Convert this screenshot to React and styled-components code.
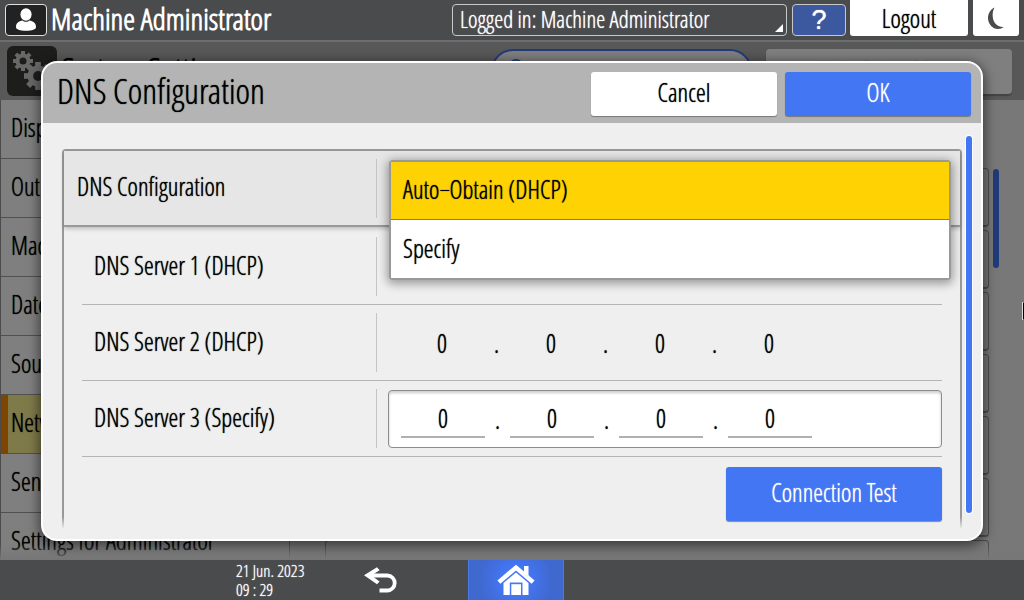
import React, { useState } from 'react';
import styled, { createGlobalStyle } from 'styled-components';

const menuItems = [
  'Display/Input',
  'Output/Input Trays',
  'Machine',
  'Date/Time/Timer',
  'Sound',
  'Network/Interface',
  'Send (Email/Folder)',
  'Settings for Administrator',
];

const settingCards = [1, 2, 3, 4, 5, 6, 7];

const dnsOptions = ['Auto−Obtain (DHCP)', 'Specify'];

const UserIcon = () => (
  <svg width="22" height="24" viewBox="0 0 22 24" fill="#fff" aria-hidden="true">
    <ellipse cx="11" cy="6.5" rx="5.6" ry="6.2" />
    <path d="M1 19c0-4 3-6 6.500-6.500C9 14.200 13 14.200 14.500 12.500 18 13 21 15 21 19c0 2.500-4 3.700-10 3.700S1 21.500 1 19z" />
  </svg>
);

const MoonIcon = () => (
  <svg width="18" height="24" viewBox="0 0 18 24" aria-hidden="true">
    <path d="M7.500 1.500C3.500 3.500 1 7.500 1 12c0 6 4.500 11 10 11 2.200 0 4.200-.7 5.800-2C11 21.500 7 17.500 6 12.500 5.200 8.500 5.700 4.500 7.500 1.500z" fill="#4a4b4c" />
  </svg>
);

const BackIcon = () => (
  <svg width="34" height="28" viewBox="0 0 34 28" fill="none" aria-hidden="true">
    <path d="M6 9.500h17.500a7.200 7.500 0 0 1 0 15H15.500" stroke="#fff" strokeWidth="3.800" />
    <path d="M13 1.200L0 9.300l13 8.900 2.600-2.800-8.200-6 8.200-5.200z" fill="#fff" />
  </svg>
);

const HomeIcon = () => (
  <svg width="38" height="32" viewBox="0 0 38 32" aria-hidden="true">
    <path d="M27 2H31.500v10.500L27 8.500z" fill="#fff" />
    <path d="M19 .8L37.600 16.500l-3 3.200L19 6.500 3.400 19.700l-3-3.200z" fill="#fff" />
    <path d="M19 8.500L31.500 19v12H25.500V18.500H12.800V31H6.500V19z" fill="#fff" />
    <path d="M14.300 20.200H24V31h-9.700z" fill="#fff" />
  </svg>
);

const Gear = ({ x, y, size }) => (
  <g transform={`translate(${x} ${y}) scale(${size})`}>
    {[0, 45, 90, 135].map((angle) => (
      <rect key={angle} x="-2" y="-10" width="4" height="20" transform={`rotate(${angle})`} />
    ))}
    <circle r="7.5" />
    <circle r="3.5" fill="#3a3a38" />
  </g>
);

const GearsIcon = () => (
  <svg width="50" height="50" viewBox="0 0 50 50" fill="#d0d0d0" aria-hidden="true">
    <Gear x={16} y={15} size={1} />
    <Gear x={31} y={30} size={1.4} />
  </svg>
);

const Octets = ({ name, label, editable }) => {
  const [values, setValues] = useState(['0', '0', '0', '0']);

  const handleChange = (index) => (e) => {
    const next = [...values];
    next[index] = e.target.value;
    setValues(next);
  };

  return (
    <OctetGroup role="group" aria-label={label} $editable={editable}>
      {values.map((value, i) => (
        <React.Fragment key={i}>
          {i > 0 && <Dot>.</Dot>}
          {editable ? (
            <OctetInput
              name={`${name}-${i}`}
              aria-label={`${label} ${i + 1}`}
              value={value}
              onChange={handleChange(i)}
            />
          ) : (
            <OctetValue>{value}</OctetValue>
          )}
        </React.Fragment>
      ))}
    </OctetGroup>
  );
};

const App = () => {
  const [mode, setMode] = useState(dnsOptions[0]);

  return (
    <Screen>
      <GlobalStyle />
      <TopBar>
        <UserBadge>
          <UserIcon />
        </UserBadge>
        <ScreenTitle>Machine Administrator</ScreenTitle>
        <LoginButton type="button">Logged in: Machine Administrator</LoginButton>
        <HelpButton type="button">?</HelpButton>
        <LogoutButton type="button">Logout</LogoutButton>
        <MoonButton type="button" aria-label="Sleep">
          <MoonIcon />
        </MoonButton>
      </TopBar>

      <Workspace>
        <SubHeader>
          <GearBox>
            <GearsIcon />
          </GearBox>
          <SubTitle>System Settings</SubTitle>
          <SearchBox>
            <SearchDot />
          </SearchBox>
          <GuideButton type="button">Help Guide Menu</GuideButton>
        </SubHeader>
        <Columns>
          <SideMenu>
            {menuItems.map((item) => (
              <SideItem key={item} type="button" $active={item.startsWith('Network')}>
                {item}
              </SideItem>
            ))}
          </SideMenu>
          <CardList>
            {settingCards.map((card) => (
              <Card key={card} />
            ))}
          </CardList>
          <PageThumb />
        </Columns>

        <Backdrop>
          <Dialog role="dialog" aria-labelledby="dialog-title">
            <DialogHeader>
              <DialogTitle id="dialog-title">DNS Configuration</DialogTitle>
              <DialogButton type="button">Cancel</DialogButton>
              <DialogButton type="button" $primary>OK</DialogButton>
            </DialogHeader>
            <DialogBody>
              <Panel>
                <ModeRow>
                  <Label>DNS Configuration</Label>
                  <DropAnchor>
                    <DropList role="listbox" aria-label="DNS Configuration">
                      {dnsOptions.map((option) => (
                        <DropOption
                          key={option}
                          type="button"
                          role="option"
                          aria-selected={option === mode}
                          $selected={option === mode}
                          onClick={() => setMode(option)}
                        >
                          {option}
                        </DropOption>
                      ))}
                    </DropList>
                  </DropAnchor>
                </ModeRow>
                <Row>
                  <Label>DNS Server 1 (DHCP)</Label>
                </Row>
                <Row>
                  <Label>DNS Server 2 (DHCP)</Label>
                  <Octets name="dns2" label="DNS Server 2" />
                </Row>
                <Row>
                  <Label>DNS Server 3 (Specify)</Label>
                  <Octets name="dns3" label="DNS Server 3" editable />
                </Row>
                <Actions>
                  <TestButton type="button">Connection Test</TestButton>
                </Actions>
              </Panel>
              <ScrollThumb />
            </DialogBody>
          </Dialog>
        </Backdrop>
        <Pointer />
      </Workspace>

      <BottomBar>
        <Clock>
          21 Jun. 2023
          <br />
          09 : 29
        </Clock>
        <BackButton type="button" aria-label="Back">
          <BackIcon />
        </BackButton>
        <HomeButton type="button" aria-label="Home">
          <HomeIcon />
        </HomeButton>
      </BottomBar>
    </Screen>
  );
};

const GlobalStyle = createGlobalStyle`
  * {
    box-sizing: border-box;
  }

  body {
    margin: 0;
    overflow: hidden;
  }

  body, button, input {
    font-family: "Open Sans Condensed Light", "Open Sans Condensed", "Roboto Condensed", sans-serif;
    font-weight: 400;
    font-size: 25px;
    line-height: 34px;
    color: #000;
    text-shadow: 0 0 1px currentColor;
  }

  button {
    padding: 0;
    border: none;
    cursor: pointer;
    white-space: nowrap;
  }
`;

const Screen = styled.div`
  display: flex;
  flex-direction: column;
  height: 100vh;
  background: #4a4b4c;
`;

const TopBar = styled.header`
  display: flex;
  align-items: flex-start;
  height: 42px;
  padding: 0 5px;
  border-bottom: 2px solid #6e6e6e;
`;

const UserBadge = styled.div`
  display: flex;
  align-items: center;
  justify-content: center;
  width: 42px;
  height: 32px;
  margin-top: 4px;
  border: 1px solid #e0e0e0;
  border-radius: 4px;
  background: #222;
`;

const ScreenTitle = styled.h1`
  flex: 1;
  margin: 0 0 0 4px;
  font-size: 30px;
  font-weight: 600;
  line-height: 38px;
  color: #fff;
  text-shadow: none;
`;

const LoginButton = styled.button`
  position: relative;
  width: 335px;
  height: 32px;
  margin-top: 4px;
  padding: 0 0 2px 7px;
  border: 1px solid #c8c8c8;
  border-radius: 4px;
  background: transparent;
  color: #fff;
  font-size: 23px;
  line-height: 28px;
  text-align: left;

  &::after {
    content: "";
    position: absolute;
    right: 3px;
    bottom: 3px;
    border-bottom: 8px solid #fff;
    border-left: 8px solid transparent;
  }
`;

const HelpButton = styled.button`
  width: 54px;
  height: 32px;
  margin: 4px 4px 0 5px;
  border: 1px solid #c8c8c8;
  border-radius: 4px;
  background: #3c589e;
  color: #fff;
  font-family: "Liberation Sans", sans-serif;
  font-size: 27px;
  line-height: 30px;
`;

const LogoutButton = styled.button`
  width: 118px;
  height: 36px;
  margin-right: 5px;
  border-radius: 0 0 3px 3px;
  background: #fff;
`;

const MoonButton = styled.button`
  display: flex;
  align-items: center;
  justify-content: center;
  width: 46px;
  height: 36px;
  border-radius: 0 0 3px 3px;
  background: #fff;
`;

const Workspace = styled.main`
  position: relative;
  flex: 1;
  display: flex;
  flex-direction: column;
  min-height: 0;
  overflow: hidden;
  background: #f0f0f0;
`;

const SubHeader = styled.div`
  display: flex;
  align-items: flex-start;
  height: 58px;
  padding: 4px 12px 0 7px;
  background: #b0b0b0;
`;

const GearBox = styled.div`
  width: 50px;
  height: 50px;
  border-radius: 6px;
  background: #3a3a38;
`;

const SubTitle = styled.h2`
  flex: 1;
  margin: 4px 0 0 4px;
  font-size: 35px;
  font-weight: inherit;
  line-height: 40px;
`;

const SearchBox = styled.div`
  width: 261px;
  height: 44px;
  margin: 3px 14px 0 0;
  padding: 8px 16px;
  border: 2px solid #4276f3;
  border-radius: 22px;
  background: #fff;
`;

const SearchDot = styled.div`
  width: 14px;
  height: 14px;
  border: 3px solid #4276f3;
  border-radius: 7px;
`;

const GuideButton = styled.button`
  width: 246px;
  height: 45px;
  margin-top: 3px;
  padding-bottom: 4px;
  border-radius: 4px;
  background: #fff;
  box-shadow: 0 2px 1px #888;
`;

const Columns = styled.div`
  flex: 1;
  display: flex;
  min-height: 0;
`;

const SideMenu = styled.nav`
  display: flex;
  flex-direction: column;
  width: 290px;
  overflow: hidden;
  border-left: 1px solid #999;
  border-right: 1px solid #aaa;
`;

const SideItem = styled.button`
  flex: none;
  height: 59px;
  padding: 0 0 4px ${({ $active }) => ($active ? '3px' : '10px')};
  border-bottom: 1px solid #a0a0a0;
  border-left: ${({ $active }) => ($active ? '7px solid #ff8a00' : 'none')};
  background: ${({ $active }) => ($active ? '#fff494' : '#fff')};
  text-align: left;
`;

const CardList = styled.div`
  flex: 1;
  display: flex;
  flex-direction: column;
  gap: 3px;
  padding: 68px 4px 0 35px;
  overflow: hidden;
`;

const Card = styled.div`
  flex: none;
  height: 59px;
  border: 1px solid #999;
  border-bottom-width: 2px;
  border-radius: 4px;
`;

const PageThumb = styled.div`
  width: 6px;
  height: 99px;
  margin: 69px 25px 0 0;
  border-radius: 3px;
  background: #4276f3;
`;

const Backdrop = styled.div`
  position: absolute;
  inset: 0;
  display: flex;
  padding: 19px 41px;
  background: linear-gradient(transparent 97%, #777 100%), rgba(0, 0, 0, 0.5);
`;

const Dialog = styled.section`
  flex: 1;
  display: flex;
  flex-direction: column;
  overflow: hidden;
  border: 2px solid #fff;
  border-radius: 16px;
  background: #efefef;
  box-shadow: 0 3px 12px 2px rgba(0, 0, 0, 0.5);
`;

const DialogHeader = styled.header`
  display: flex;
  align-items: flex-start;
  gap: 8px;
  height: 60px;
  padding: 9px 10px 0 14px;
  background: #b4b4b4;
`;

const DialogTitle = styled.h2`
  flex: 1;
  margin: 0;
  font-size: 35px;
  font-weight: inherit;
  line-height: 38px;
`;

const DialogButton = styled.button`
  width: 186px;
  height: 44px;
  padding-bottom: 4px;
  border-radius: 3px;
  background: ${({ $primary }) => ($primary ? '#4276f3' : '#fff')};
  box-shadow: 0 1px 1px #777;
  color: ${({ $primary }) => ($primary ? '#fff' : '#000')};
`;

const DialogBody = styled.div`
  flex: 1;
  display: flex;
  gap: 4px;
  min-height: 0;
  padding: 13px 9px 10px 19px;
`;

const Panel = styled.div`
  position: relative;
  flex: 1;
  margin-top: 13px;
  border: 2px solid #999;
  border-bottom: none;
  border-radius: 4px 4px 0 0;

  &::after {
    content: "";
    position: absolute;
    inset: auto -2px 0;
    height: 12px;
    background: linear-gradient(transparent, #efefef);
    pointer-events: none;
  }
`;

const Label = styled.div`
  display: flex;
  align-items: center;
  height: 59px;
  padding-bottom: 4px;
  border-right: 1px solid #c4c4c4;
`;

const ModeRow = styled.div`
  display: grid;
  grid-template-columns: 300px 1fr;
  align-items: center;
  height: 76px;
  padding-left: 13px;
  border-bottom: 2px solid #999;
  background: #e6e6e6;
  box-shadow: 0 2px 4px rgba(0, 0, 0, 0.2);
`;

const Row = styled.div`
  display: grid;
  grid-template-columns: 283px 1fr;
  align-items: center;
  height: 76px;
  margin: 0 18px;
  padding-left: 12px;
  border-bottom: 1px solid #b4b4b4;

  ${ModeRow} + & {
    height: 78px;
    padding-top: 2px;
  }
`;

const DropAnchor = styled.div`
  position: relative;
  align-self: start;
`;

const DropList = styled.div`
  position: absolute;
  z-index: 1;
  top: 9px;
  right: 9px;
  left: 12px;
  display: flex;
  flex-direction: column;
  border: 2px solid #999;
  border-radius: 4px;
  background: #fff;
  box-shadow: 0 2px 10px 2px rgba(0, 0, 0, 0.35);
`;

const DropOption = styled.button`
  height: 58px;
  padding: 0 0 3px 12px;
  border-bottom: ${({ $selected }) => ($selected ? '1px solid #a08000' : 'none')};
  background: ${({ $selected }) => ($selected ? '#ffd204' : '#fff')};
  text-align: left;
`;

const OctetGroup = styled.div`
  display: flex;
  align-items: center;
  height: 58px;
  margin-left: 11px;
  padding: 0 12px;
  border: ${({ $editable }) => ($editable ? '1px solid #8c8c8c' : 'none')};
  border-radius: 4px;
  background: ${({ $editable }) => ($editable ? '#fff' : 'transparent')};
  box-shadow: ${({ $editable }) => ($editable ? 'inset 0 2px 3px rgba(0, 0, 0, 0.2)' : 'none')};
`;

const OctetValue = styled.output`
  width: 84px;
  text-align: center;
`;

const OctetInput = styled.input`
  width: 84px;
  height: 38px;
  padding: 0;
  border: none;
  border-bottom: 2px solid #b0b0b0;
  border-radius: 0;
  outline: none;
  background: transparent;
  text-align: center;
`;

const Dot = styled.span`
  width: 25px;
  text-align: center;
`;

const Actions = styled.div`
  position: relative;
  z-index: 1;
  display: flex;
  justify-content: flex-end;
  padding: 10px 18px 0;
`;

const TestButton = styled.button`
  width: 216px;
  height: 54px;
  padding-bottom: 4px;
  border-radius: 3px;
  background: #4276f3;
  box-shadow: 0 1px 1px #888;
  color: #fff;
`;

const ScrollThumb = styled.div`
  width: 6px;
  margin-bottom: 16px;
  border-radius: 3px;
  background: #4276f3;
  box-shadow: 0 0 0 1px #fff;
`;

const Pointer = styled.div`
  position: absolute;
  top: 260px;
  right: 0;
  width: 2px;
  height: 18px;
  border: 1px solid #ddd;
  border-right-color: #000;
`;

const BottomBar = styled.footer`
  display: flex;
  align-items: center;
  height: 40px;
  padding-left: 236px;
`;

const Clock = styled.time`
  width: 128px;
  color: #fff;
  font-size: 17px;
  line-height: 19px;
`;

const BackButton = styled.button`
  display: flex;
  margin-right: 70px;
  background: transparent;
`;

const HomeButton = styled.button`
  display: flex;
  align-items: center;
  justify-content: center;
  width: 96px;
  height: 40px;
  border: 1px solid #4b77e4;
  border-width: 0 1px;
  background: radial-gradient(circle, #4478fa 20%, #4069d0 70%);
`;

export default App;
